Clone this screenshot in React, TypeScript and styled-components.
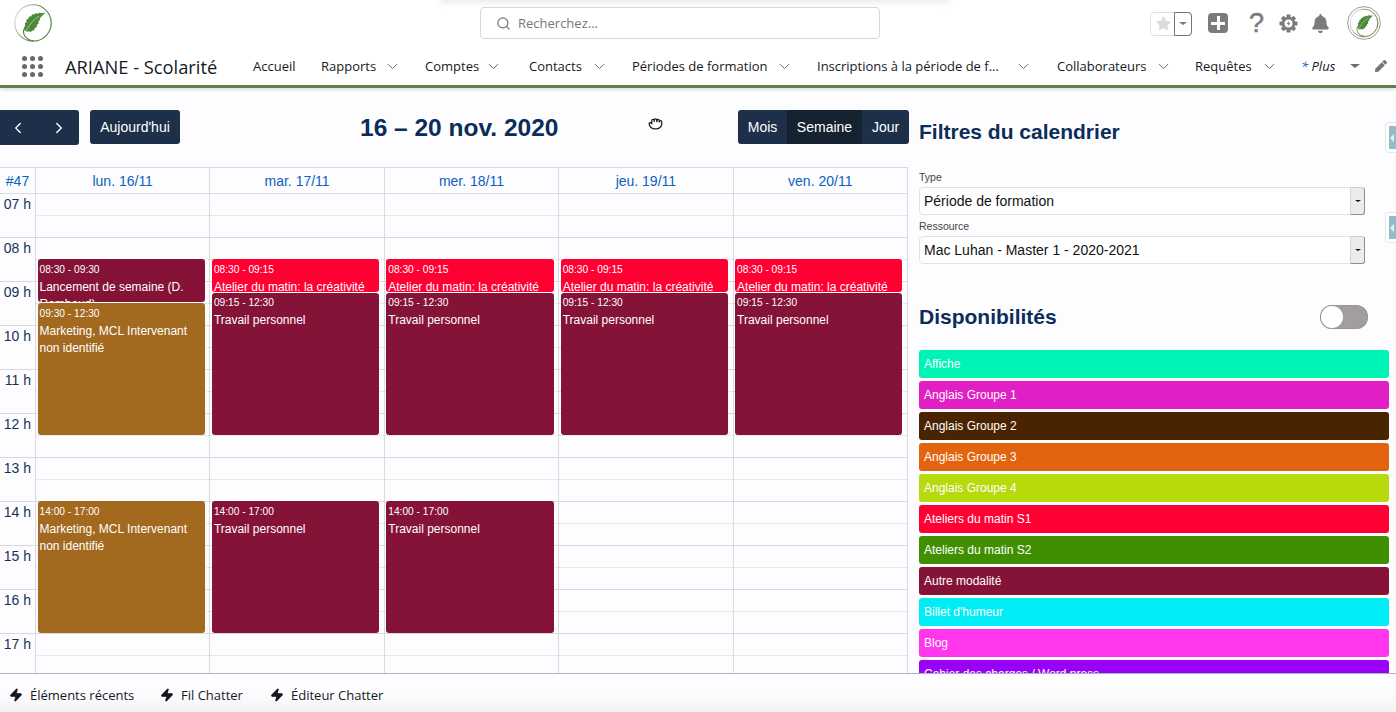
import React from "react";
import styled, { createGlobalStyle } from "styled-components";
import { ChevronDown, ChevronLeft, ChevronRight, Search, Grab, Zap } from "lucide-react";
import { FaBell, FaPen, FaStar } from "react-icons/fa";

const Global = createGlobalStyle`
  html, body { margin: 0; padding: 0; background: #fdfcfe; }
  * { box-sizing: border-box; }
`;

const ui = `"Open Sans", "Noto Sans", sans-serif`;
const arial = `"Liberation Sans", Arial, sans-serif`;

const Page = styled.div`
  width: 1396px; height: 712px; overflow: hidden; position: relative;
  display: flex; flex-direction: column; background: #fdfcfe; font-family: ${arial};
`;
const TopGlow = styled.div`
  position: absolute; top: -6px; left: 440px; width: 510px; height: 8px; border-radius: 8px;
  background: #e6e6e8; filter: blur(3px); z-index: 3;
`;
const Header = styled.header`
  flex: none; height: 88px; background: #fff; border-bottom: 3px solid #5f8149;
  box-shadow: 0 2px 3px rgba(0,0,0,.12); position: relative; z-index: 2;
`;
const TopRow = styled.div`
  height: 50px; display: flex; align-items: flex-start; padding: 4px 15px 0 14px;
`;
const SearchBox = styled.div`
  width: 400px; height: 32px; margin: 3px 0 0 428px; border: 1px solid #d8d8dc; border-radius: 4px;
  display: flex; align-items: center; gap: 7px; padding-left: 15px; background: #fff;
  font: 13px ${ui}; color: #76767a;
`;
const Tools = styled.div`
  margin-left: auto; display: flex; align-items: center; height: 38px;
`;
const FavGroup = styled.div`
  width: 42px; height: 24px; display: flex; border-radius: 4px; border: 1px solid #dfdfe2; margin-right: 16px; margin-top: 1px;
`;
const FavStar = styled.div`
  width: 24px; display: flex; align-items: center; justify-content: center; color: #dcdcde;
`;
const FavMenu = styled.div`
  flex: 1; border: 1px solid #77777a; border-radius: 0 4px 4px 0; margin: -1px; display: flex; align-items: center; justify-content: center;
`;
const DownTriangle = styled.span<{ $size: number; $color: string }>`
  width: 0; height: 0; border-left: ${p => p.$size}px solid transparent; border-right: ${p => p.$size}px solid transparent;
  border-top: ${p => p.$size * 0.85}px solid ${p => p.$color};
`;
const PlusBox = styled.div`
  width: 20px; height: 20px; background: #7b7b7e; border-radius: 4px; position: relative; margin-right: 21px;
  &::before { content: ""; position: absolute; left: 8.5px; top: 3px; width: 3px; height: 14px; background: #fff; }
  &::after { content: ""; position: absolute; left: 3px; top: 8.5px; width: 14px; height: 3px; background: #fff; }
`;
const Help = styled.span`
  font: 27px/27px ${arial}; color: #7b7b7e; width: 15px; margin-right: 15px; text-align: center; -webkit-text-stroke: 0.5px #7b7b7e;
`;
const ToolIcon = styled.span<{ $gap: number }>`
  display: flex; color: #7b7b7e; margin-right: ${p => p.$gap}px;
`;
const LogoMark = styled.svg<{ $size: number }>`
  width: ${p => p.$size}px; height: ${p => p.$size}px; flex: none;
`;
const NavRow = styled.nav`
  height: 35px; display: flex; align-items: center; padding: 0 0 3px 22px; font: 13px ${ui}; color: #16191f;
`;
const Waffle = styled.div`
  width: 21px; display: grid; grid-template-columns: repeat(3, 5px); gap: 3px; margin-right: 22px;
  span { width: 5px; height: 5px; border-radius: 50%; background: #67676a; }
`;
const AppName = styled.div`
  font: 18.3px ${ui}; color: #16191f; width: 188px;
`;
const NavEntry = styled.div<{ $w: number; $gap: number }>`
  width: ${p => p.$w}px; margin-right: ${p => p.$gap}px; display: flex; align-items: center; white-space: nowrap; flex: none;
  justify-content: space-between;
`;
const PlusLabel = styled.span`
  font-style: italic;
  b { color: #0b62c0; font-weight: 400; }
`;
const PenIcon = styled.span`
  display: flex; color: #77777a; margin-left: 15px;
`;
const Main = styled.main`
  flex: 1; min-height: 0; display: flex; overflow: hidden; position: relative;
`;
const CalendarCol = styled.section`
  width: 909px; flex: none; padding-top: 22px; display: flex; flex-direction: column;
`;
const Toolbar = styled.div`
  height: 35px; display: grid; grid-template-columns: 360px 198px 1fr; align-items: start; margin-bottom: 22px;
`;
const LeftTools = styled.div`
  display: flex; gap: 11px; align-items: flex-start;
`;
const ArrowGroup = styled.div`
  width: 79px; height: 35px; background: #1d2f49; border-radius: 0 3px 3px 0; color: #fff;
  display: flex; align-items: center; justify-content: space-between; padding: 0 11px 0 9px;
`;
const TodayBtn = styled.div`
  width: 90px; height: 34px; background: #1d2f49; border-radius: 3px; color: #fff; font-size: 14px;
  display: flex; align-items: center; justify-content: center;
`;
const RangeTitle = styled.h2`
  margin: 0; font: bold 24.5px/35px ${arial}; color: #0b2d5a; text-align: center; white-space: nowrap;
`;
const ViewGroup = styled.div`
  justify-self: end; height: 34px; display: flex; background: #1d2f49; border-radius: 3px; overflow: hidden;
`;
const ViewBtn = styled.div<{ $w: number; $active?: boolean }>`
  width: ${p => p.$w}px; display: flex; align-items: center; justify-content: center; color: #fff; font-size: 14px;
  background: ${p => (p.$active ? "#15222f" : "transparent")};
`;
const GrabCursor = styled.span`
  position: absolute; left: 648px; top: 27px; display: flex; color: #1a1a1a;
`;
const GridHead = styled.div`
  flex: none; height: 27px; display: grid; grid-template-columns: 35px repeat(5, 174.4px); width: 908px;
  border: 1px solid #dcdadf; border-width: 1px 1px 1px 0;
`;
const HeadCell = styled.div<{ $first?: boolean }>`
  display: flex; align-items: center; justify-content: center; color: #0b62c0; font-size: 14px;
  border-left: ${p => (p.$first ? "none" : "1px solid #dcdadf")};
`;
const GridBody = styled.div`
  flex: 1; min-height: 0; overflow: hidden; display: grid; grid-template-columns: 35px repeat(5, 174.4px); width: 908px;
  border-right: 1px solid #dcdadf;
`;
const TimeCol = styled.div``;
const HourLabel = styled.div`
  height: 44px; padding: 2px 4px 0 0; text-align: right; font-size: 14px; line-height: 17px; color: #16325c;
  background: linear-gradient(#d9d9dd, #d9d9dd) bottom / 100% 1px no-repeat;
`;
const DayCol = styled.div`
  position: relative; border-left: 1px solid #dcdadf;
`;
const Slot = styled.div<{ $half: boolean }>`
  height: 22px; border-bottom: 1px ${p => (p.$half ? "dotted" : "solid")} #d9d9dd;
`;
const EventCard = styled.div<{ $bg: string }>`
  position: absolute; left: 1.5px; right: 4.5px; background: ${p => p.$bg}; color: #fff; border-radius: 3px;
  padding: 3.5px 2px 0; overflow: hidden; z-index: 1;
`;
const EventTime = styled.div`
  font-size: 10.2px; line-height: 14px; height: 16px; white-space: nowrap;
`;
const EventTitle = styled.div`
  font-size: 12px; line-height: 17.6px;
`;
const Side = styled.aside`
  flex: 1; min-width: 0; padding: 31px 7px 0 10px; overflow: hidden;
`;
const SideTitle = styled.h3`
  margin: 0; font: bold 21px/26px ${arial}; color: #0b2d5a; white-space: nowrap;
`;
const FilterFields = styled.div`
  margin-top: 26px;
`;
const FieldLabel = styled.div`
  font-size: 10.5px; line-height: 12px; color: #444; height: 16px;
`;
const SelectBox = styled.div`
  width: 446px; height: 28px; border: 1px solid #e4e0e5; border-radius: 4px; background: #fff; display: flex; align-items: center;
  padding-left: 4px; font-size: 14px; color: #111; position: relative; margin-bottom: 5px;
`;
const SelectArrow = styled.span`
  position: absolute; right: -1px; top: -1px; bottom: -1px; width: 15px; background: #ececef;
  border: 1px solid #8e8e92; border-top-color: #cfcfd3; border-left-color: #d4d4d8; border-radius: 0 3px 3px 0;
  display: flex; align-items: center; justify-content: center;
`;
const AvailHead = styled.div`
  display: flex; align-items: center; justify-content: space-between; margin-top: 40px; margin-bottom: 20px; padding-right: 21px; height: 26px;
`;
const Toggle = styled.div`
  width: 48px; height: 24px; border-radius: 12px; background: #a39e9e; position: relative; box-shadow: inset 0 0 0 1px #9a9595;
  &::before { content: ""; position: absolute; left: 1px; top: 1px; width: 22px; height: 22px; border-radius: 50%; background: #fff; }
`;
const AvailList = styled.div`
  display: flex; flex-direction: column; gap: 3px;
`;
const AvailRow = styled.div<{ $bg: string }>`
  flex: none; height: 28px; border-radius: 3px; background: ${p => p.$bg}; color: #fff; font-size: 12px;
  display: flex; align-items: center; padding-left: 5px; width: 470px;
`;
const EdgeHandle = styled.div<{ $top: number }>`
  position: absolute; right: -4px; top: ${p => p.$top}px; width: 15px; height: 31px; background: #fff;
  border: 1px solid #e6e6ea; border-radius: 4px 0 0 4px; padding: 3px 0 3px 3px;
  &::before { content: ""; display: block; height: 100%; background: #93bccb; }
  &::after { content: ""; position: absolute; left: 4px; top: 11px; border: 4px solid transparent; border-right-color: #e8eef1; border-left-width: 0; }
`;
const Footer = styled.footer`
  flex: none; height: 39px; border-top: 1px solid #a9b4c2; position: relative; z-index: 2;
  background: linear-gradient(#fdfcfe 50%, #f3f3f4); display: flex; align-items: center; padding: 4px 0 0 9px;
  font: 13px ${ui}; color: #16191f;
`;
const FootItem = styled.div<{ $w: number }>`
  width: ${p => p.$w}px; display: flex; align-items: center; gap: 7px; white-space: nowrap;
`;

const Leaf = ({ size, ring }: { size: number; ring?: boolean }) => {
  const id = ring ? "ringB" : "ringA";
  return (
    <LogoMark $size={size} viewBox="0 0 38 38">
      <defs>
        <linearGradient id={id} x1="0" y1="0.2" x2="1" y2="0.6">
          <stop offset="0" stopColor="#e4e6e0" />
          <stop offset="0.45" stopColor="#7d9a69" />
          <stop offset="1" stopColor="#4f7a38" />
        </linearGradient>
      </defs>
      {ring && <circle cx="19" cy="19" r="18.3" fill="#fff" stroke="#8f8f92" strokeWidth="1" />}
      <circle cx="19" cy="19" r={ring ? 15.5 : 18.2} fill="#fff" stroke={`url(#${id})`} strokeWidth="1.1" />
      <g transform={ring ? "translate(3.2 3.2) scale(0.83)" : undefined}>
        <path
          d="M31.5 8.5 L27 9.2 L26 8.4 L23.5 9.8 L22 9 L20 10.6 L18.3 10.2 L17 12.4 L15 12.6 L14.4 14.8 L12.5 15.6 L12.6 17.8 L10.8 19.5 L11.3 21.6 L9.8 24 L10.6 26.6 L13 27.8 L15.4 27.2 L16.4 28 L18.8 26.4 L20 26.2 L21 24 L22.6 23.2 L23 20.8 L24.6 19.6 L24.4 17.4 L26 15.8 L25.8 14.2 Z"
          fill="#4c8a39"
        />
        <path d="M12 27 C15 21 19 16 25 12" fill="none" stroke="#cfe0c4" strokeWidth="0.7" />
        <path d="M10 25 C8.5 30 11 36 20 36.8" fill="none" stroke="#4f7a38" strokeWidth="1.1" />
      </g>
    </LogoMark>
  );
};

const Gear = () => (
  <svg width="19" height="19" viewBox="0 0 19 19">
    {[0, 45, 90, 135, 180, 225, 270, 315].map(a => (
      <rect key={a} x="7.5" y="0.5" width="4" height="4" rx="0.8" fill="#7b7b7e" transform={`rotate(${a} 9.5 9.5)`} />
    ))}
    <circle cx="9.5" cy="9.5" r="6.8" fill="#7b7b7e" />
    <circle cx="9.5" cy="9.5" r="4" fill="#fff" />
    <path d="M10.4 6.6 L7.6 10 L9.3 10 L8.6 12.4 L11.4 9 L9.7 9 Z" fill="#7b7b7e" />
  </svg>
);

const nav: { t: string; w: number; gap: number }[] = [
  { t: "Rapports", w: 80, gap: 24 },
  { t: "Comptes", w: 77, gap: 27 },
  { t: "Contacts", w: 79, gap: 24 },
  { t: "Périodes de formation", w: 161, gap: 24 },
  { t: "Inscriptions à la période de f...", w: 215, gap: 25 },
  { t: "Collaborateurs", w: 115, gap: 23 },
  { t: "Requêtes", w: 83, gap: 23 },
];

const hours = ["07", "08", "09", "10", "11", "12", "13", "14", "15", "16", "17"];
const H = 44;
const START = 7;
type Ev = { from: number; to: number; bg: string; time: string; title: string };
const M = "#851337", R = "#ff0033", O = "#a2691f";
const morningStd: Ev[] = [
  { from: 8.5, to: 9.25, bg: R, time: "08:30 - 09:15", title: "Atelier du matin: la créativité" },
  { from: 9.27, to: 12.5, bg: M, time: "09:15 - 12:30", title: "Travail personnel" },
];
const pm: Ev = { from: 14, to: 17, bg: M, time: "14:00 - 17:00", title: "Travail personnel" };
const days: { label: string; events: Ev[] }[] = [
  { label: "lun. 16/11", events: [
    { from: 8.5, to: 9.47, bg: M, time: "08:30 - 09:30", title: "Lancement de semaine (D. Rambaud)" },
    { from: 9.5, to: 12.5, bg: O, time: "09:30 - 12:30", title: "Marketing, MCL Intervenant non identifié" },
    { from: 14, to: 17, bg: O, time: "14:00 - 17:00", title: "Marketing, MCL Intervenant non identifié" },
  ] },
  { label: "mar. 17/11", events: [...morningStd, pm] },
  { label: "mer. 18/11", events: [...morningStd, pm] },
  { label: "jeu. 19/11", events: morningStd },
  { label: "ven. 20/11", events: morningStd },
];
const avail: [string, string][] = [
  ["Affiche", "#00f4b6"],
  ["Anglais Groupe 1", "#e01fc4"],
  ["Anglais Groupe 2", "#4a2300"],
  ["Anglais Groupe 3", "#e3640e"],
  ["Anglais Groupe 4", "#b8d90c"],
  ["Ateliers du matin S1", "#ff0033"],
  ["Ateliers du matin S2", "#3f8f00"],
  ["Autre modalité", "#851337"],
  ["Billet d'humeur", "#00edf5"],
  ["Blog", "#ff36ec"],
  ["Cahier des charges / Word press", "#9900f5"],
];

export default function App() {
  return (
    <Page>
      <Global />
      <Header>
        <TopRow>
          <Leaf size={38} />
          <SearchBox><Search size={15} strokeWidth={2} color="#77777a" />Recherchez...</SearchBox>
          <Tools>
            <FavGroup>
              <FavStar><FaStar size={15} /></FavStar>
              <FavMenu><DownTriangle $size={4.5} $color="#77777a" /></FavMenu>
            </FavGroup>
            <PlusBox />
            <Help>?</Help>
            <ToolIcon $gap={13}><Gear /></ToolIcon>
            <ToolIcon $gap={17}><FaBell size={19} /></ToolIcon>
            <Leaf size={34} ring />
          </Tools>
        </TopRow>
        <NavRow>
          <Waffle>{Array.from({ length: 9 }, (_, i) => <span key={i} />)}</Waffle>
          <AppName>ARIANE - Scolarité</AppName>
          <NavEntry $w={44} $gap={24}>Accueil</NavEntry>
          {nav.map(n => (
            <NavEntry key={n.t} $w={n.w} $gap={n.gap}>
              {n.t}
              <ChevronDown size={17} strokeWidth={1.3} color="#5c5c60" />
            </NavEntry>
          ))}
          <NavEntry $w={59} $gap={0}>
            <PlusLabel><b>*</b> Plus</PlusLabel>
            <DownTriangle $size={5.5} $color="#6d6d70" />
          </NavEntry>
          <PenIcon><FaPen size={12} /></PenIcon>
        </NavRow>
      </Header>
      <Main>
        <CalendarCol>
          <Toolbar>
            <LeftTools>
              <ArrowGroup>
                <ChevronLeft size={18} strokeWidth={1.8} />
                <ChevronRight size={18} strokeWidth={1.8} />
              </ArrowGroup>
              <TodayBtn>Aujourd'hui</TodayBtn>
            </LeftTools>
            <RangeTitle>16 – 20 nov. 2020</RangeTitle>
            <ViewGroup>
              <ViewBtn $w={49}>Mois</ViewBtn>
              <ViewBtn $w={75} $active>Semaine</ViewBtn>
              <ViewBtn $w={47}>Jour</ViewBtn>
            </ViewGroup>
          </Toolbar>
          <GrabCursor><Grab size={15} strokeWidth={2} fill="#fff" /></GrabCursor>
          <GridHead>
            <HeadCell $first>#47</HeadCell>
            {days.map(d => <HeadCell key={d.label}>{d.label}</HeadCell>)}
          </GridHead>
          <GridBody>
            <TimeCol>
              {hours.map(h => <HourLabel key={h}>{h} h</HourLabel>)}
            </TimeCol>
            {days.map(d => (
              <DayCol key={d.label}>
                {hours.flatMap(h => [
                  <Slot key={h + "a"} $half />,
                  <Slot key={h + "b"} $half={false} />,
                ])}
                {d.events.map(e => (
                  <EventCard
                    key={e.time}
                    $bg={e.bg}
                    style={{ top: (e.from - START) * H - 1, height: (e.to - e.from) * H }}
                  >
                    <EventTime>{e.time}</EventTime>
                    <EventTitle>{e.title}</EventTitle>
                  </EventCard>
                ))}
              </DayCol>
            ))}
          </GridBody>
        </CalendarCol>
        <Side>
          <SideTitle>Filtres du calendrier</SideTitle>
          <FilterFields>
            <FieldLabel>Type</FieldLabel>
            <SelectBox>Période de formation<SelectArrow><DownTriangle $size={3} $color="#111" /></SelectArrow></SelectBox>
            <FieldLabel>Ressource</FieldLabel>
            <SelectBox>Mac Luhan - Master 1 - 2020-2021<SelectArrow><DownTriangle $size={3} $color="#111" /></SelectArrow></SelectBox>
          </FilterFields>
          <AvailHead>
            <SideTitle>Disponibilités</SideTitle>
            <Toggle />
          </AvailHead>
          <AvailList>
            {avail.map(([t, c]) => <AvailRow key={t} $bg={c}>{t}</AvailRow>)}
          </AvailList>
        </Side>
        <EdgeHandle $top={34} />
        <EdgeHandle $top={124} />
      </Main>
      <Footer>
        <FootItem $w={151}><Zap size={14} fill="#16191f" color="#16191f" />Éléments récents</FootItem>
        <FootItem $w={110}><Zap size={14} fill="#16191f" color="#16191f" />Fil Chatter</FootItem>
        <FootItem $w={130}><Zap size={14} fill="#16191f" color="#16191f" />Éditeur Chatter</FootItem>
      </Footer>
      <TopGlow />
    </Page>
  );
}
